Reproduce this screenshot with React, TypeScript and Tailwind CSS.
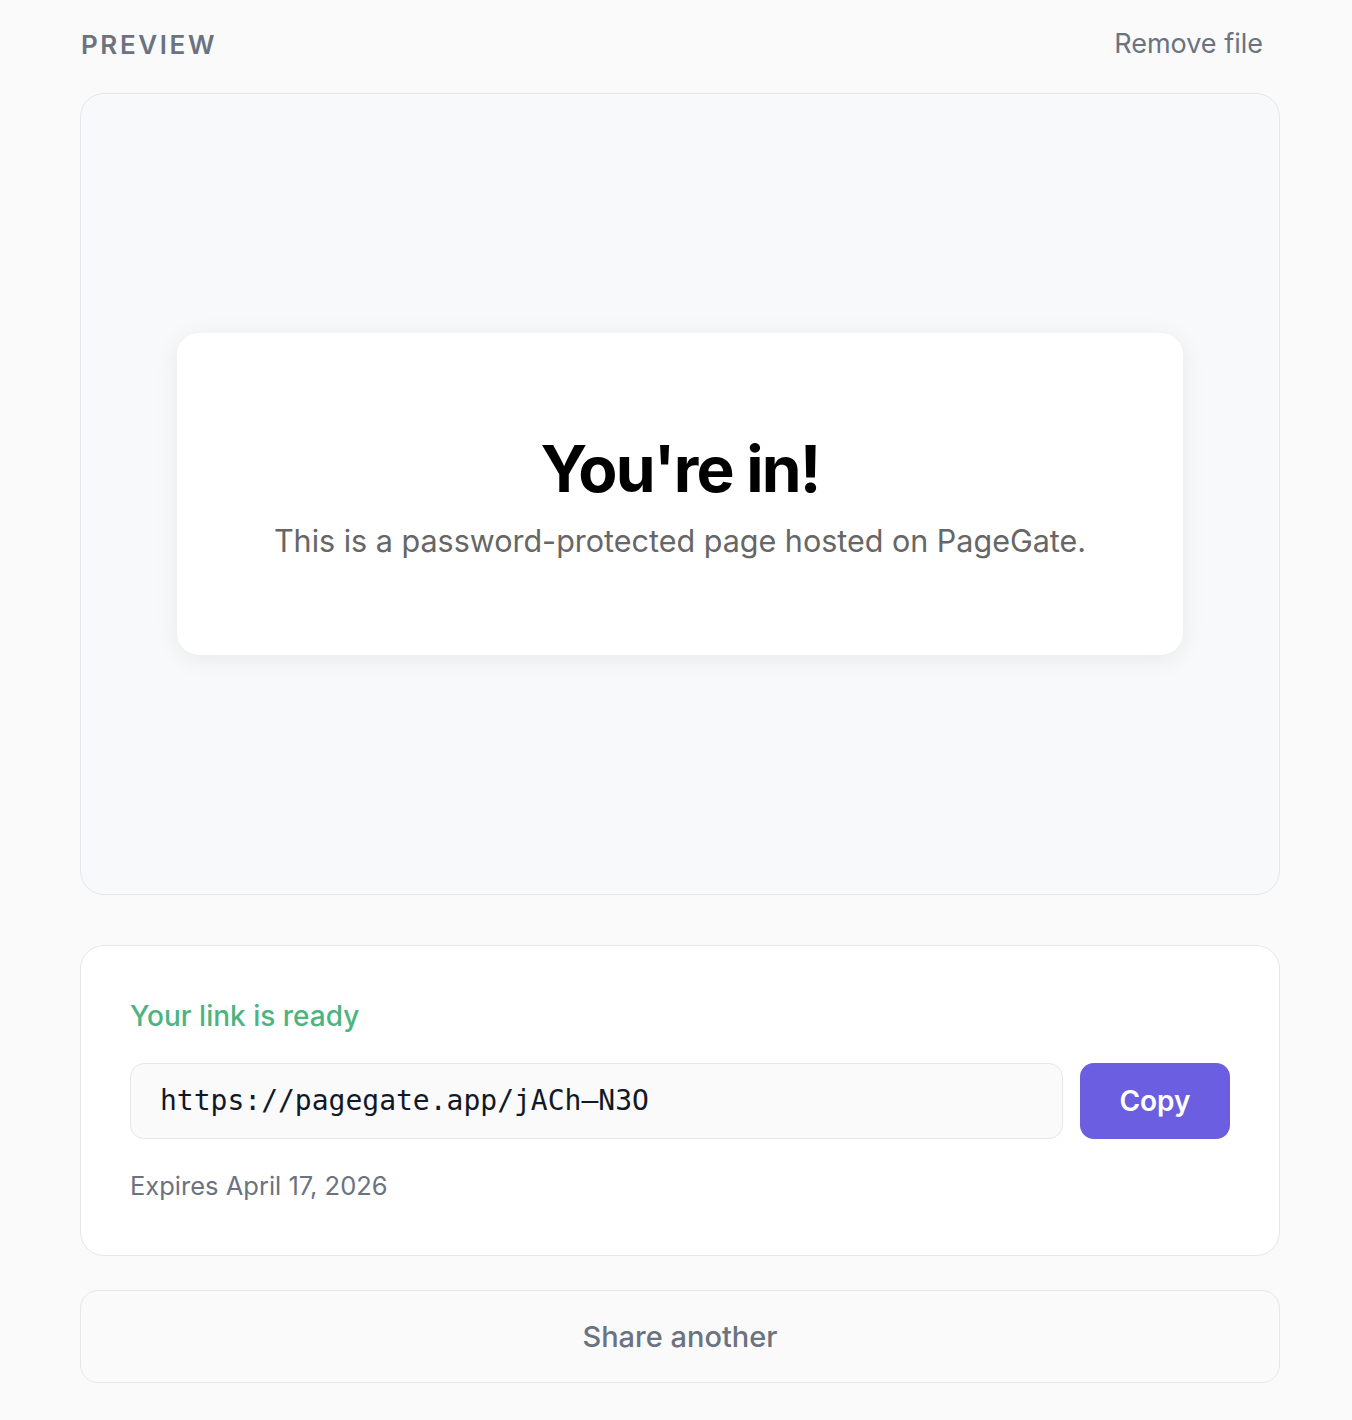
export default function App() {
  return (
    <div
      className="min-h-[1420px] bg-[#fafafa] pt-6 pl-20 pr-[72px]"
      style={{ fontFamily: 'Inter, "Noto Sans", sans-serif' }}
    >
      {/* header */}
      <div className="flex h-[40px] items-center justify-between">
        <span className="pl-px text-[26px] font-semibold tracking-[0.1em] text-[#6b7280]">
          PREVIEW
        </span>
        <button className="pr-[17px] text-[27px] text-[#6b7280]">Remove file</button>
      </div>

      {/* preview frame */}
      <div className="mt-[29px] flex h-[802px] items-center justify-center rounded-[24px] border border-[#e5e7eb] bg-[#f8f9fa]">
        <div className="flex h-[322px] w-[1006px] flex-col items-center rounded-[22px] bg-white pt-[97px] shadow-[0_4px_24px_rgba(0,0,0,0.07)]">
          <h1 className="text-[64px] leading-[77px] font-bold tracking-[-0.028em] text-black">
            You're in!
          </h1>
          <p className="mt-[11px] text-[30.5px] leading-[45px] text-[#666666]">
            This is a password-protected page hosted on PageGate.
          </p>
        </div>
      </div>

      {/* link card */}
      <div className="mt-[50px] rounded-[24px] border border-[#e5e7eb] bg-white px-[49px] pt-[50px] pb-[51px]">
        <div className="text-[28px] leading-[40px] font-medium text-[#4cb47f]">Your link is ready</div>
        <div className="mt-[27px] flex gap-[17px]">
          <div className="flex h-[76px] flex-1 items-center rounded-[14px] border border-[#e5e7eb] bg-[#fafafa] px-[29px]">
            <span
              className="text-[28px] text-[#111827]"
              style={{ fontFamily: '"DejaVu Sans Mono", monospace' }}
            >
              https://pagegate.app/jACh–N3O
            </span>
          </div>
          <button className="h-[76px] w-[150px] rounded-[14px] bg-[#6b5ee0] text-[28px] font-semibold text-white">
            Copy
          </button>
        </div>
        <div className="mt-[29px] text-[25.5px] leading-[36px] text-[#6b7280]">Expires April 17, 2026</div>
      </div>

      {/* share another */}
      <button className="mt-[34px] flex h-[93px] w-full items-center justify-center rounded-[18px] border border-[#e5e7eb] bg-[#fafafa] text-[29px] font-medium text-[#6b7280]">
        Share another
      </button>
    </div>
  )
}
